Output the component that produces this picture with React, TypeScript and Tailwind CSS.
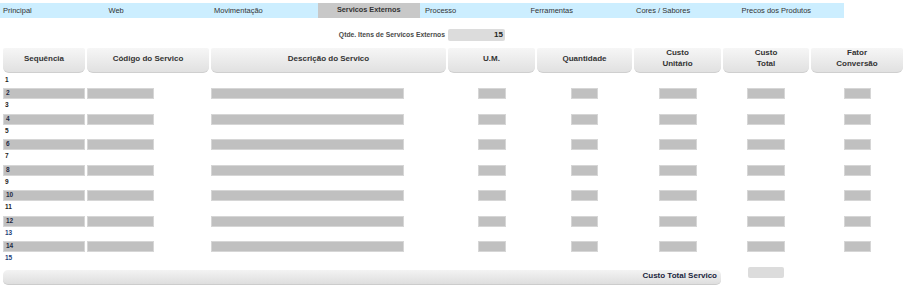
import React from "react";

const tabs = [
  "Principal",
  "Web",
  "Movimentação",
  "Servicos Externos",
  "Processo",
  "Ferramentas",
  "Cores / Sabores",
  "Precos dos Produtos",
];

const cols =
  "grid grid-cols-[82px_122px_235px_87px_95px_87px_86px_92px] gap-x-[2px] pl-[3px]";

const headers: string[][] = [
  ["Sequência"],
  ["Código do Servico"],
  ["Descrição do Servico"],
  ["U.M."],
  ["Quantidade"],
  ["Custo", "Unitário"],
  ["Custo", "Total"],
  ["Fator", "Conversão"],
];

const barWidths = [82, 67, 193, 28, 27, 38, 38, 27];

function Bar({ w, children }: { w: number; children?: React.ReactNode }) {
  return (
    <div
      className="h-[11px] bg-[#c0c0c0] border border-[#d6d6d6] flex items-center pl-[2px] text-[6.5px] font-bold text-[#1e2a44] leading-none"
      style={{ width: w }}
    >
      {children}
    </div>
  );
}

export default function App() {
  const rows = Array.from({ length: 15 }, (_, i) => i + 1);
  return (
    <div className="w-[915px] h-[290px] bg-white overflow-hidden font-['Liberation_Sans',Arial,sans-serif]">
      {/* Tabs */}
      <div className="pt-[3px]">
        <div className="grid grid-cols-8 w-[844px] h-[15px] bg-[#cceeff]">
          {tabs.map((t, i) =>
            i === 3 ? (
              <div
                key={t}
                className="ml-[1px] mr-[2px] bg-[#c8c8c8] flex items-center justify-center font-bold text-[7.3px] text-[#333]"
              >
                {t}
              </div>
            ) : (
              <div key={t} className="flex items-center pl-[3px] text-[7.5px] text-[#333]">
                {t}
              </div>
            )
          )}
        </div>
      </div>

      {/* Qtde */}
      <div className={`${cols} mt-[11px] h-[12px]`}>
        <div className="col-span-3 flex items-center justify-end pr-[1px] text-[6.8px] font-bold text-[#4a4a4a]">
          Qtde. Itens de Servicos Externos
        </div>
        <div className="w-[57px] h-[12px] bg-[#dcdcdc] rounded-[2px] flex items-center justify-end pr-[2px] text-[8px] font-bold text-[#222]">
          15
        </div>
      </div>

      {/* Header */}
      <div className={`${cols} mt-[7px]`}>
        {headers.map((h, i) => (
          <div
            key={i}
            className="h-[25px] rounded-t-[2px] rounded-b-[6px] bg-gradient-to-b from-[#f6f6f6] to-[#e1e1e1] border-b border-[#cfcfcf] flex flex-col items-center justify-center pb-[4px] text-[8px] font-bold text-[#333] leading-[11px]"
          >
            {h.map((l) => (
              <span key={l}>{l}</span>
            ))}
          </div>
        ))}
      </div>

      {/* Rows */}
      <div className="mt-[1px]">
        {rows.map((n) =>
          n % 2 === 1 ? (
            <div key={n} className={`${cols} h-[12.5px]`}>
              <div
                className={`flex items-center pl-[2px] pb-[1px] text-[6.5px] font-bold leading-none ${
                  n >= 13 ? "text-[#1f3f7a]" : "text-[#222]"
                }`}
              >
                {n}
              </div>
            </div>
          ) : (
            <div key={n} className={`${cols} h-[13px] pt-[1.5px]`}>
              {barWidths.map((w, i) => (
                <div key={i} className={i >= 3 ? "flex justify-center" : "flex"}>
                  <Bar w={w}>{i === 0 ? n : null}</Bar>
                </div>
              ))}
            </div>
          )
        )}
      </div>

      {/* Footer */}
      <div className={`${cols} mt-[1px] items-start`}>
        <div className="col-span-6 mt-[3.5px] h-[15px] rounded-[5px] bg-gradient-to-b from-[#f3f3f3] to-[#dedede] border-b border-[#cccccc] flex items-start justify-end pr-[4px] pt-[1px] text-[8px] font-bold text-[#1a1f3d] leading-[10px]">
          Custo Total Servico
        </div>
        <div className="flex justify-center">
          <div className="w-[36px] h-[11px] mt-[1px] bg-[#dcdcdc] rounded-[2px]" />
        </div>
      </div>
    </div>
  );
}
